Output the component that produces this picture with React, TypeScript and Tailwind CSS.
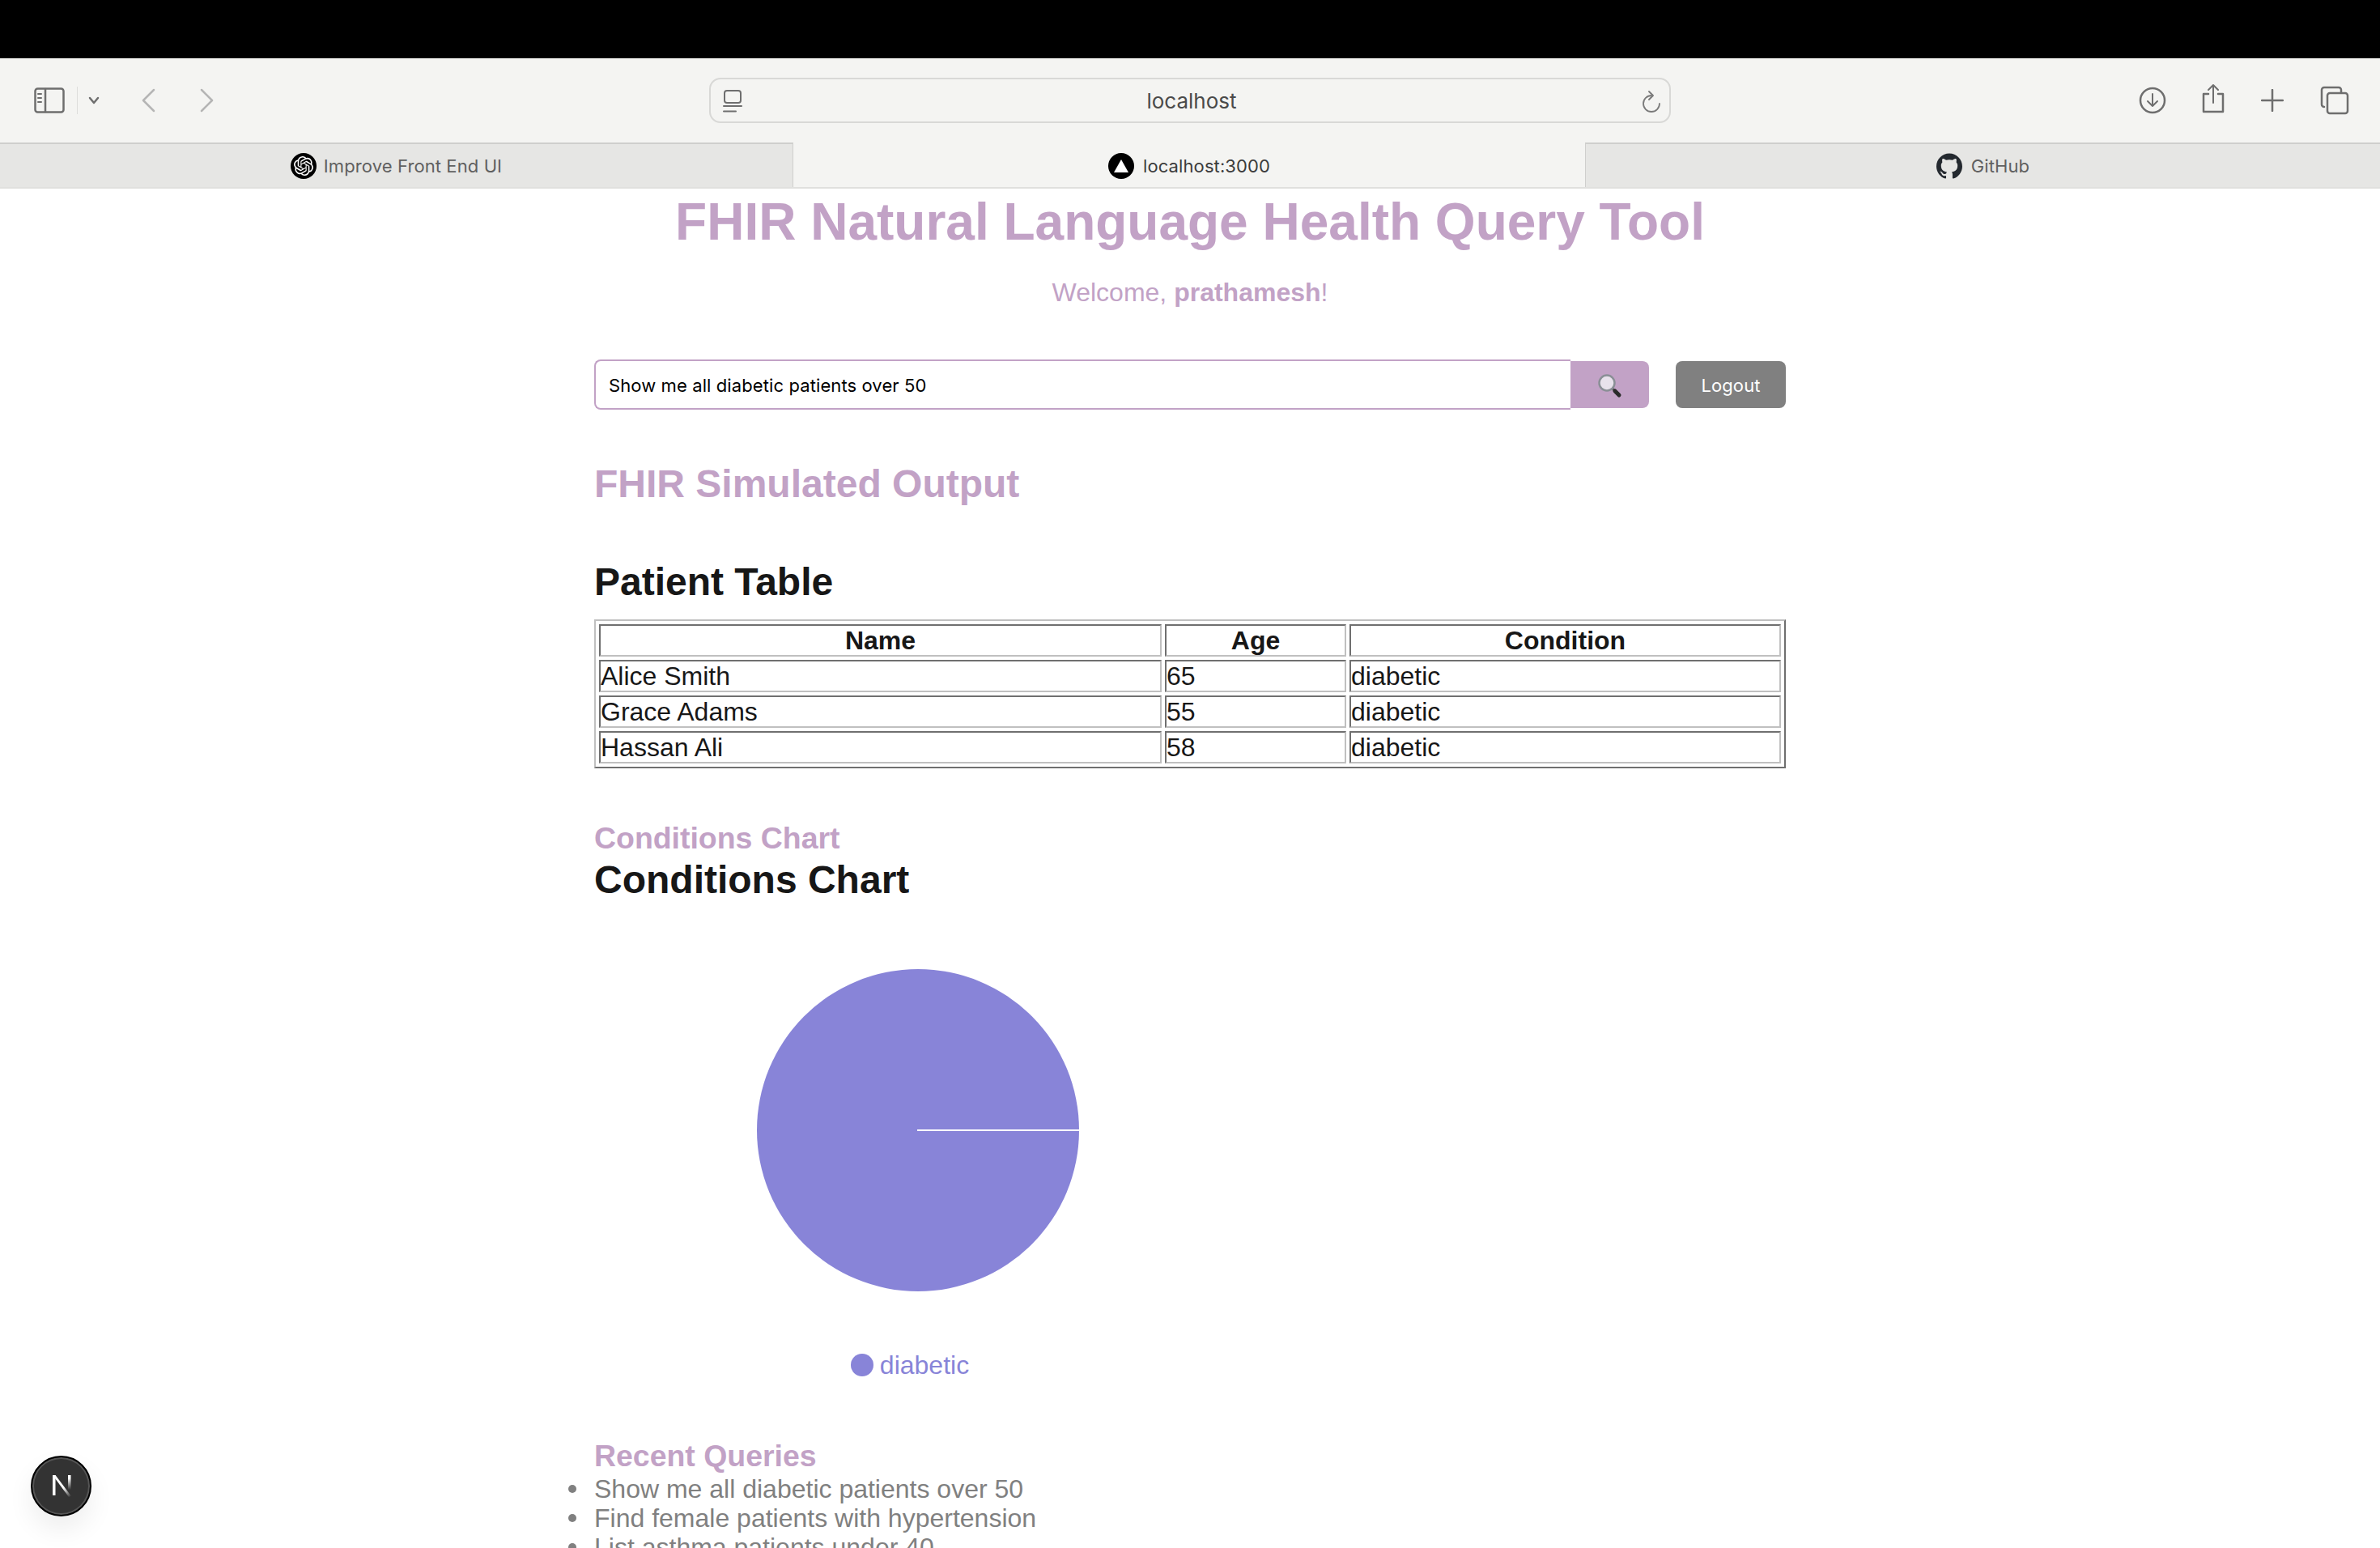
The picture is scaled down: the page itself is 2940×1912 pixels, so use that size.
import { SiOpenai, SiGithub } from "react-icons/si";

const rows = [
  { name: "Alice Smith", age: 65, condition: "diabetic" },
  { name: "Grace Adams", age: 55, condition: "diabetic" },
  { name: "Hassan Ali", age: 58, condition: "diabetic" },
];

const queries = [
  "Show me all diabetic patients over 50",
  "Find female patients with hypertension",
  "List asthma patients under 40",
];

const iconProps = { fill: "none", stroke: "#6e6e6e", strokeWidth: 2, strokeLinecap: "round", strokeLinejoin: "round" } as const;

function Toolbar() {
  return (
    <div className="flex h-[104px] items-center bg-[#f4f4f2] font-['Inter',sans-serif]">
      <div className="flex w-[876px] items-center pl-[42px]">
        <svg width="38" height="32" viewBox="0 0 38 32" {...iconProps} strokeWidth={2.5}>
          <rect x="1.5" y="1.5" width="35" height="29" rx="3" />
          <path d="M14 2v28" />
          <path d="M5 8h4M5 13h4M5 18h4" strokeWidth={2} />
        </svg>
        <div className="ml-[15px] h-[34px] w-px bg-[#dddddb]" />
        <svg className="ml-[12px]" width="16" height="10" viewBox="0 0 16 10" {...iconProps} strokeWidth={2.5}>
          <path d="M3 2l5 6 5-6" />
        </svg>
        <svg className="ml-[50px]" width="18" height="30" viewBox="0 0 18 30" {...iconProps} stroke="#b5b5b5" strokeWidth={2.5}>
          <path d="M16 2L3 15l13 13" />
        </svg>
        <svg className="ml-[55px]" width="18" height="30" viewBox="0 0 18 30" {...iconProps} stroke="#b5b5b5" strokeWidth={2.5}>
          <path d="M2 2l13 13L2 28" />
        </svg>
      </div>
      <div className="relative flex h-[56px] w-[1188px] items-center justify-center rounded-[14px] border-2 border-[#d8d8d6] pl-[4px] text-[26px] text-[#4a4a4a]">
        <svg className="absolute left-[14px] top-[13px]" width="26" height="28" viewBox="0 0 26 28" {...iconProps} strokeWidth={2}>
          <rect x="3" y="1" width="20" height="15" rx="3" />
          <path d="M2 20h22" />
          <path d="M2 26.5h15" />
        </svg>
        localhost
        <svg className="absolute right-[8px] top-[14px]" width="26" height="28" viewBox="0 0 26 28" {...iconProps} stroke="#7a7a7a" strokeWidth={1.8}>
          <path d="M12 6a10 10 0 1 0 10 10" />
          <path d="M9 1l5 5-5 5" />
        </svg>
      </div>
      <div className="flex flex-1 items-center justify-end pr-[38px]">
        <svg width="34" height="34" viewBox="0 0 34 34" {...iconProps} strokeWidth={2.5}>
          <circle cx="17" cy="17" r="15" />
          <path d="M17 9v15M11 18l6 6 6-6" strokeWidth={2} />
        </svg>
        <svg className="ml-[43px] -translate-y-[2px]" width="30" height="38" viewBox="0 0 30 38" {...iconProps} strokeWidth={2.5}>
          <path d="M9 13H3v22h24V13h-6" />
          <path d="M15 24V2M9 8l6-6 6 6" strokeWidth={2} />
        </svg>
        <svg className="ml-[44px]" width="28" height="28" viewBox="0 0 28 28" {...iconProps} strokeWidth={2.5}>
          <path d="M14 1v26M1 14h26" />
        </svg>
        <svg className="ml-[45px]" width="36" height="36" viewBox="0 0 36 36" {...iconProps} strokeWidth={2.5}>
          <path d="M5 26a3 3 0 0 1-3-3V5a3 3 0 0 1 3-3h18a3 3 0 0 1 3 3v3" />
          <rect x="9" y="9" width="25" height="25" rx="3" />
        </svg>
      </div>
    </div>
  );
}

function Tabs() {
  return (
    <div className="flex h-[57px] border-b-2 border-[#e0e0de] bg-[#f4f4f2] font-['Inter',sans-serif] text-[22px] tracking-[0.1px]">
      <div className="flex w-[980px] items-center justify-center gap-[9px] border-r border-t-2 border-[#cfcfcd] bg-[#e6e6e4] pt-[1px] text-[#606060]">
        <span className="flex h-[32px] w-[32px] items-center justify-center rounded-full bg-black">
          <SiOpenai className="text-white" size={24} />
        </span>
        Improve Front End UI
      </div>
      <div className="flex w-[978px] items-center justify-center gap-[11px] pt-[3px] text-[#3c3c3c]">
        <span className="flex h-[32px] w-[32px] items-center justify-center rounded-full bg-black">
          <svg width="18" height="16" viewBox="0 0 18 16"><path d="M9 0l9 16H0z" fill="#fff" /></svg>
        </span>
        localhost:3000
      </div>
      <div className="flex flex-1 items-center justify-center gap-[11px] border-l border-t-2 border-[#cfcfcd] bg-[#e6e6e4] pt-[1px] text-[#606060]">
        <SiGithub className="text-[#24292f]" size={32} />
        GitHub
      </div>
    </div>
  );
}

function PatientTable() {
  return (
    <table className="mt-[18px] w-full table-fixed border-separate border-spacing-[4px] border-2 border-t-[#c0c0c0] border-r-[#6f6f6f] border-b-[#6f6f6f] border-l-[#c0c0c0] text-[32px] leading-[36px] text-[#171717]">
      <thead>
        <tr>
          <th className="w-[695px] border-2 border-t-[#6f6f6f] border-r-[#c0c0c0] border-b-[#c0c0c0] border-l-[#6f6f6f] font-bold">Name</th>
          <th className="w-[224px] border-2 border-t-[#6f6f6f] border-r-[#c0c0c0] border-b-[#c0c0c0] border-l-[#6f6f6f] font-bold">Age</th>
          <th className="border-2 border-t-[#6f6f6f] border-r-[#c0c0c0] border-b-[#c0c0c0] border-l-[#6f6f6f] font-bold">Condition</th>
        </tr>
      </thead>
      <tbody>
        {rows.map((row) => (
          <tr key={row.name}>
            <td className="border-2 border-t-[#6f6f6f] border-r-[#c0c0c0] border-b-[#c0c0c0] border-l-[#6f6f6f]">{row.name}</td>
            <td className="border-2 border-t-[#6f6f6f] border-r-[#c0c0c0] border-b-[#c0c0c0] border-l-[#6f6f6f]">{row.age}</td>
            <td className="border-2 border-t-[#6f6f6f] border-r-[#c0c0c0] border-b-[#c0c0c0] border-l-[#6f6f6f]">{row.condition}</td>
          </tr>
        ))}
      </tbody>
    </table>
  );
}

export default function App() {
  return (
    <div className="relative h-[1912px] overflow-hidden bg-white font-['Liberation_Sans',sans-serif]">
      <div className="h-[72px] bg-black" />
      <Toolbar />
      <Tabs />

      <main className="mx-auto w-[1472px]">
        <h1 className="mt-[4px] text-center text-[64px] leading-[74px] font-bold text-[#c2a2c6]">
          FHIR Natural Language Health Query Tool
        </h1>
        <p className="mt-[32px] text-center text-[32px] leading-[36px] text-[#c2a2c6]">
          Welcome, <strong>prathamesh</strong>!
        </p>

        <div className="mt-[65px] flex items-center">
          <div className="flex h-[62px] w-[1206px] items-center rounded-l-[8px] border-2 border-r-0 border-[#c2a2c6] pt-[2px] pl-[16px] font-['Inter',sans-serif] text-[22px] tracking-[0.1px] text-black">
            Show me all diabetic patients over 50
          </div>
          <button className="flex h-[58px] w-[97px] items-center justify-center rounded-r-[8px] bg-[#c2a2c6] pt-[3px]">
            <svg width="30" height="30" viewBox="0 0 30 30">
              <path d="M18 18l3 3" stroke="#555" strokeWidth="3" />
              <path d="M21 21l5 5" stroke="#2a2a2a" strokeWidth="5" strokeLinecap="round" />
              <circle cx="11" cy="11" r="9.5" fill="#e8e2ec" stroke="#8a8f96" strokeWidth="2.5" />
            </svg>
          </button>
          <button className="ml-auto flex h-[58px] w-[136px] items-center justify-center rounded-[8px] bg-[#808080] pt-[2px] font-['Inter',sans-serif] text-[22px] tracking-[0.1px] text-white">
            Logout
          </button>
        </div>

        <h2 className="mt-[64px] text-[48px] leading-[56px] font-bold text-[#c2a2c6]">FHIR Simulated Output</h2>
        <h3 className="mt-[65px] text-[48px] leading-[56px] font-bold text-[#171717]">Patient Table</h3>
        <PatientTable />

        <h3 className="mt-[63px] text-[37.44px] leading-[46px] font-bold text-[#c2a2c6]">Conditions Chart</h3>
        <h3 className="mt-[1px] text-[48px] leading-[56px] font-bold text-[#171717]">Conditions Chart</h3>

        <div className="mt-[31px] w-[800px]">
          <svg width="800" height="500" viewBox="0 0 800 500" className="block">
            <circle cx="400" cy="250" r="199" fill="#8884d8" />
            <path d="M399 250h200" stroke="#fff" strokeWidth="2" />
          </svg>
          <div className="mt-[22px] flex items-center justify-center pr-[20px] text-[32px] leading-[36px] text-[#8884d8]">
            <span className="mr-[8px] h-[28px] w-[28px] rounded-full bg-[#8884d8]" />
            diabetic
          </div>
        </div>

        <h3 className="mt-[71px] text-[37.44px] leading-[46px] font-bold text-[#c2a2c6]">Recent Queries</h3>
        <ul className="text-[32px] leading-[36px] text-[#808080]">
          {queries.map((query) => (
            <li key={query} className="-ml-[32px] flex items-center">
              <span className="mr-[22px] h-[10px] w-[10px] rounded-full bg-[#808080]" />
              {query}
            </li>
          ))}
        </ul>
      </main>

      {/* next dev indicator */}
      <div className="absolute top-[1798px] left-[38px] flex h-[75px] w-[75px] items-center justify-center rounded-full border-2 border-black bg-[#333] shadow-[inset_0_0_0_2px_#555,0_16px_32px_rgba(0,0,0,0.07)]">
        <svg width="27" height="29" viewBox="0 0 27 29">
          <defs>
            <linearGradient id="nstem" x1="0" y1="0" x2="0" y2="1">
              <stop offset="0.2" stopColor="#fff" />
              <stop offset="1" stopColor="#fff" stopOpacity="0" />
            </linearGradient>
            <linearGradient id="ndiag" gradientUnits="userSpaceOnUse" x1="2" y1="1" x2="25" y2="28">
              <stop offset="0.6" stopColor="#fff" />
              <stop offset="1" stopColor="#fff" stopOpacity="0" />
            </linearGradient>
          </defs>
          <path d="M3 1h3.5v25H3z" fill="#fff" />
          <path d="M3 1h3.5L26 27l-3 1z" fill="url(#ndiag)" />
          <rect x="22" y="1" width="3.5" height="18" fill="url(#nstem)" />
        </svg>
      </div>
    </div>
  );
}
